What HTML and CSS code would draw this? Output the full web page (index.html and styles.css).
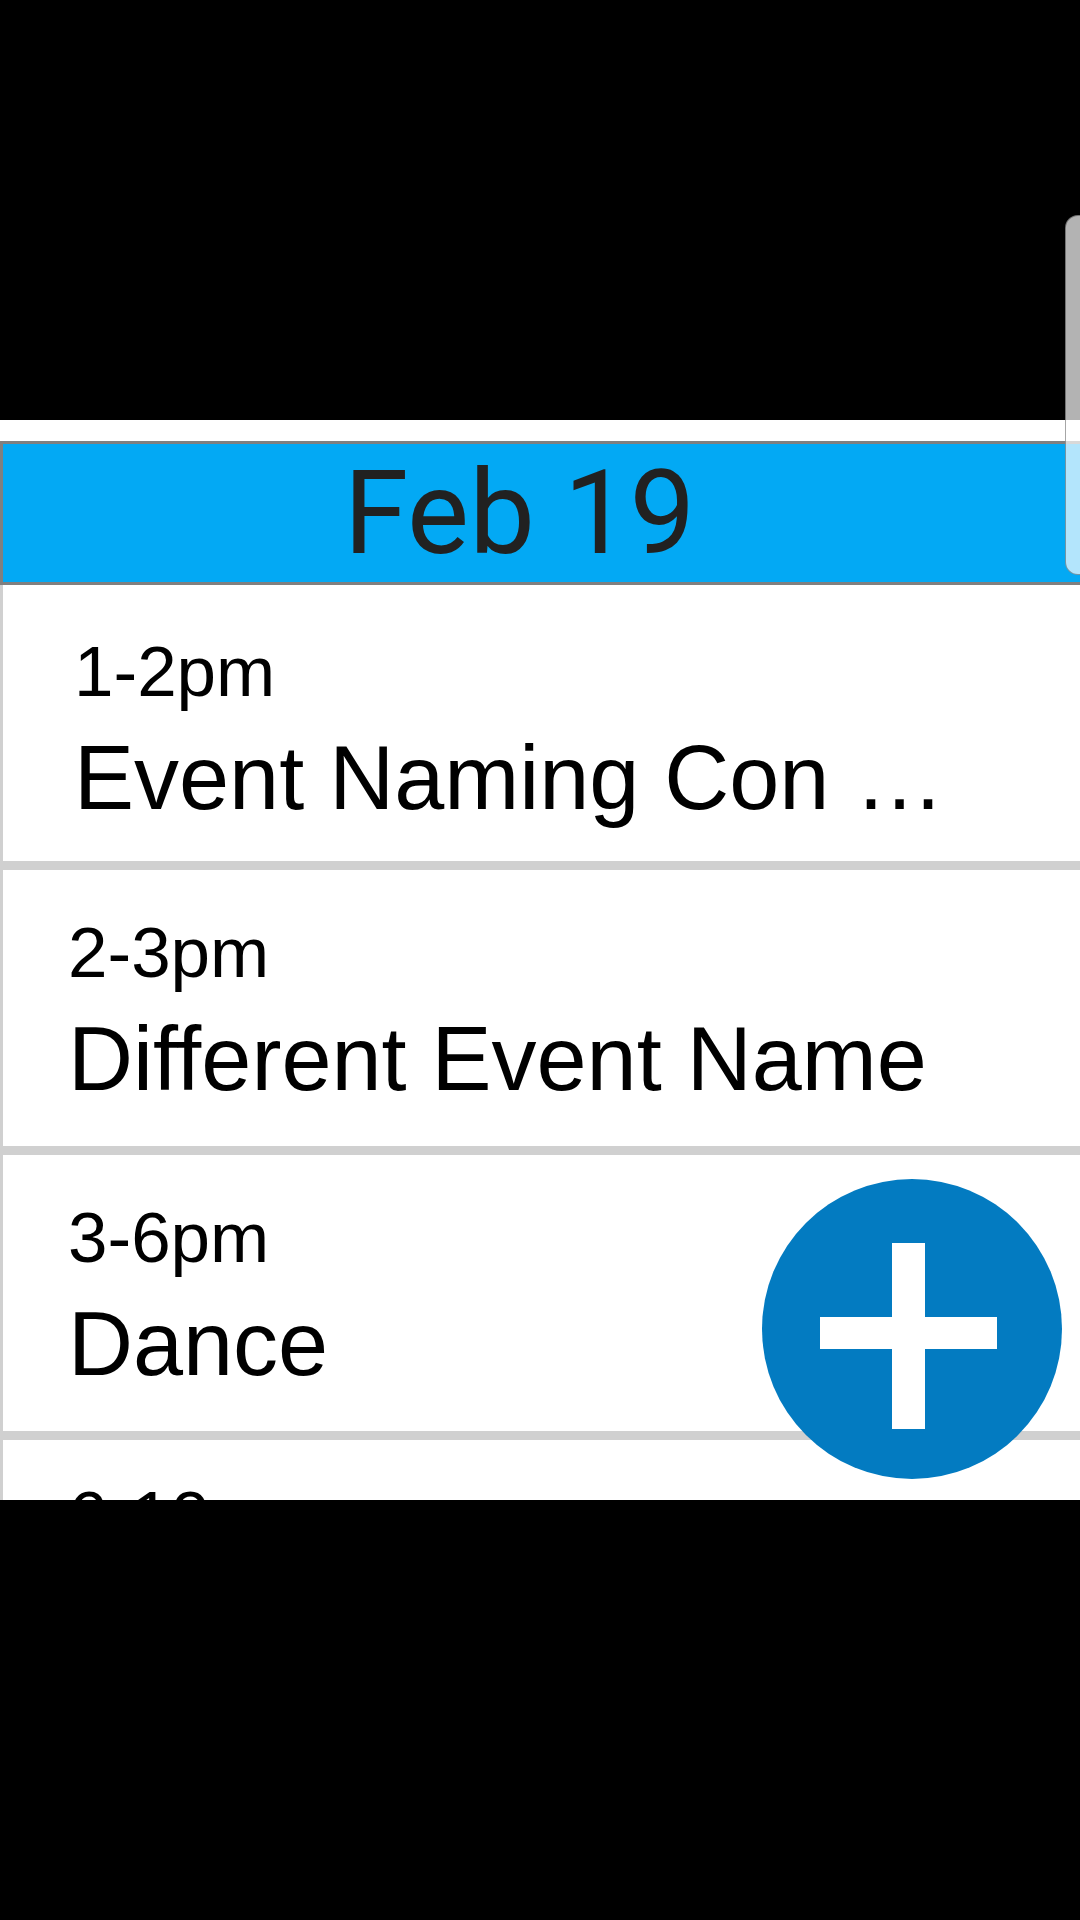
FILE: index.html
```html
<!DOCTYPE html>
<html lang="en">
<head>
<meta charset="utf-8">
<title>Feb 19</title>
<link rel="stylesheet" href="styles.css">
</head>
<body>
<div class="screen">
  <div class="topbar"></div>
  <main class="app">
    <header class="day-header">Feb 19</header>
    <ul class="events">
      <li class="event event--first">
        <div class="event-time">1-2pm</div>
        <div class="event-name">Event Naming Con …</div>
      </li>
      <li class="event">
        <div class="event-time">2-3pm</div>
        <div class="event-name">Different Event Name</div>
      </li>
      <li class="event">
        <div class="event-time">3-6pm</div>
        <div class="event-name">Dance</div>
      </li>
      <li class="event event--last">
        <div class="event-time">6-10pm</div>
      </li>
    </ul>
    <button class="fab" aria-label="Add event">
      <svg width="300" height="300" viewBox="0 0 300 300">
        <circle cx="150" cy="150" r="150" fill="#037bc1"/>
        <rect x="130" y="64" width="33" height="186" fill="#ffffff"/>
        <rect x="58" y="138" width="177" height="32" fill="#ffffff"/>
      </svg>
    </button>
  </main>
  <div class="bottombar"></div>
  <div class="edge-handle"></div>
</div>
</body>
</html>
```
FILE: styles.css
```css
* { box-sizing: border-box; }
html, body {
  margin: 0;
  padding: 0;
  background: #000;
}
.screen {
  position: relative;
  width: 1080px;
  height: 1920px;
  display: flex;
  flex-direction: column;
  overflow: hidden;
  font-family: "Liberation Sans", Arial, sans-serif;
}
.topbar {
  height: 420px;
  flex: none;
  background: #000;
}
.bottombar {
  flex: 1;
  background: #000;
}
.app {
  position: relative;
  height: 1080px;
  flex: none;
  background: #fff;
  padding-top: 21px;
  overflow: hidden;
  display: flex;
  flex-direction: column;
}
.day-header {
  height: 144px;
  background: #03a9f4;
  border: 3px solid #808080;
  border-right: none;
  font-family: Roboto, "Liberation Sans", sans-serif;
  font-size: 117px;
  line-height: 138px;
  color: #212121;
  text-align: center;
  padding-right: 44px;
}
.events {
  list-style: none;
  margin: 0;
  padding: 0;
  background: #d0d0d0;
  display: flex;
  flex-direction: column;
  gap: 9px;
  flex: 1;
}
.event {
  margin-left: 3px;
  background: #fff;
  padding: 43px 0 37px 65px;
  display: flex;
  flex-direction: column;
  gap: 16px;
  color: #000;
}
.event--first {
  padding-top: 47px;
  padding-bottom: 33px;
  padding-left: 71px;
}
.event--last {
  padding-top: 37px;
}
.event-time {
  font-size: 71px;
  line-height: 80px;
}
.event-name {
  font-size: 90px;
  line-height: 100px;
  white-space: nowrap;
}
.fab {
  position: absolute;
  left: 762px;
  top: 759px;
  width: 300px;
  height: 300px;
  padding: 0;
  margin: 0;
  border: none;
  background: none;
  border-radius: 50%;
}
.fab svg { display: block; }
.edge-handle {
  position: absolute;
  left: 1065px;
  top: 215px;
  width: 30px;
  height: 360px;
  border: 1px solid rgba(0, 0, 0, 0.35);
  border-radius: 13px;
  background: rgba(255, 255, 255, 0.7);
}
```
